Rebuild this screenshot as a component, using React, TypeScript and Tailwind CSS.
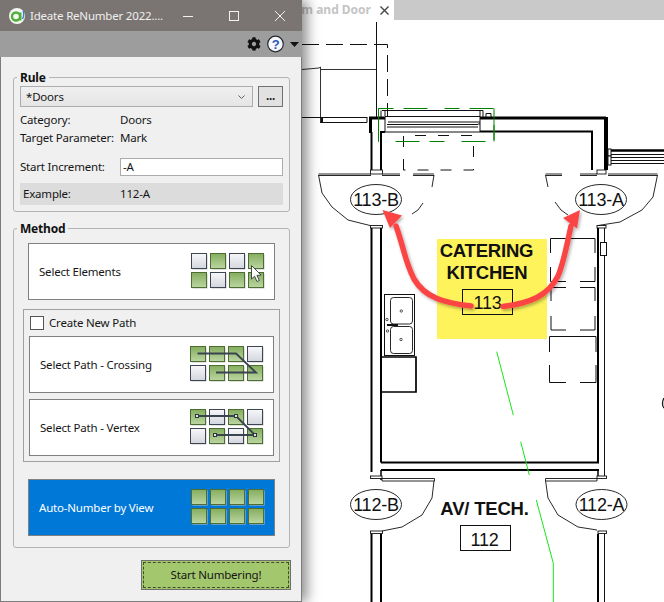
import React from "react";
import { FaCog } from "react-icons/fa";

type Mode = "none" | "cross" | "vertex" | "cursor";

function TileGrid({ pattern, mode, uid }: { pattern: string; mode: Mode; uid: string }) {
  const cells = pattern.split("");
  const nodes: [number, number][] = [[7, 7], [46, 7], [65, 26], [25, 26]];
  return (
    <svg width="76" height="37" viewBox="0 0 76 37" className="block shrink-0">
      <defs>
        <linearGradient id={uid + "g"} x1="0" y1="0" x2="0" y2="1">
          <stop offset="0" stopColor="#84ad5e" />
          <stop offset="1" stopColor="#bcd6a2" />
        </linearGradient>
        <linearGradient id={uid + "w"} x1="0" y1="0" x2="0" y2="1">
          <stop offset="0" stopColor="#f8f8fa" />
          <stop offset="1" stopColor="#d3d6de" />
        </linearGradient>
      </defs>
      {cells.map((c, i) => {
        const x = 0.5 + (i % 4) * 19;
        const y = 0.5 + Math.floor(i / 4) * 19;
        return (
          <g key={i}>
            <rect x={x + 1} y={y + 1} width="15" height="15" fill="#c4c4c4" />
            <rect
              x={x}
              y={y}
              width="15"
              height="15"
              fill={`url(#${uid}${c === "G" ? "g" : "w"})`}
              stroke={c === "G" ? "#4c6e33" : "#3d4552"}
              strokeWidth="1"
            />
          </g>
        );
      })}
      {mode === "cross" && (
        <path d="M7.5 7.5H46L66 26.5H26" fill="none" stroke="#3a4450" strokeWidth="1.8" />
      )}
      {mode === "vertex" && (
        <g>
          <path d="M7 7H46L65 26H25" fill="none" stroke="#3a4450" strokeWidth="1.8" />
          {nodes.map(([x, y], i) => (
            <rect key={i} x={x - 1.5} y={y - 1.5} width="3" height="3" fill="#dfe6d4" stroke="#2f3640" strokeWidth="1" />
          ))}
        </g>
      )}
      {mode === "cursor" && (
        <path
          d="M60.5 12.5V26L63.6 23.2L66 28.5L68.3 27.5L65.9 22.4L70 22Z"
          fill="#ffffff"
          stroke="#33383f"
          strokeWidth="0.9"
          strokeLinejoin="round"
        />
      )}
    </svg>
  );
}

function PlanText({ x, y, s, bold, children }: { x: number; y: number; s: number; bold?: boolean; children: string }) {
  return (
    <text
      x={x}
      y={y}
      fontSize={s}
      fontWeight={bold ? 700 : 400}
      fontFamily="'Liberation Sans', Arial, sans-serif"
      textAnchor="middle"
      fill="#111"
    >
      {children}
    </text>
  );
}

function Plan() {
  const tag = (cx: number, cy: number, t: string) => (
    <g key={t}>
      <ellipse cx={cx} cy={cy} rx="25.5" ry="15" fill="#fff" stroke="#111" strokeWidth="0.9" />
      <PlanText x={cx} y={cy + 6.5} s={18}>{t}</PlanText>
    </g>
  );
  return (
    <svg viewBox="302 20 362 582" width="362" height="582" className="block">
      <defs>
        <filter id="arrowShadow" x="-20%" y="-20%" width="150%" height="150%">
          <feDropShadow dx="1.5" dy="2" stdDeviation="1.5" floodColor="#000" floodOpacity="0.3" />
        </filter>
      </defs>
      <rect x="302" y="20" width="362" height="582" fill="#fff" />

      {/* upper left lines */}
      <path d="M376.5 22V117" stroke="#111" strokeWidth="1" />
      <path d="M302 44.5H387.5V117" fill="none" stroke="#111" strokeWidth="1" strokeDasharray="17 7" />
      <path d="M302 69.5L319 68L320.5 67V122M320.5 69.5H376" fill="none" stroke="#333" strokeWidth="1" />
      <path d="M302 117.5H320M320 117.5H367M320 122.5H367M367 117V122.5" fill="none" stroke="#111" strokeWidth="1" />
      <path d="M322 118V122" stroke="#111" strokeWidth="2" />

      {/* top wall */}
      <path d="M480 118H606" stroke="#000" strokeWidth="3" />
      <path d="M370.5 117V133M369 118H385" stroke="#000" strokeWidth="3" />
      <path d="M480 131.5H592V170" fill="none" stroke="#000" strokeWidth="2" />
      <path d="M606 117V170" stroke="#000" strokeWidth="4" />
      <path d="M381 171V132H385" fill="none" stroke="#000" strokeWidth="2" />
      <path d="M371.5 132V171" stroke="#000" strokeWidth="2" />

      {/* window */}
      <path
        d="M382 110.5H483M385 116.5H480M388 122H480M387 124.5H478M387 127H478M385 132H480M385 117V132M480 110V132M480 124H478M381 110.5V117M385 110.5V116M483 110.5V117M486 113.5H491V117M486 113.5V117"
        fill="none"
        stroke="#111"
        strokeWidth="1"
      />
      <path d="M403.5 170V135.5H473.5V170H403.5" fill="none" stroke="#111" strokeWidth="1" strokeDasharray="11 12" />
      <rect x="378.5" y="108.5" width="115.5" height="33" fill="none" stroke="#008000" strokeWidth="1" strokeDasharray="15 10 24 17" />
      <path d="M378.5 108.5V141.5M494 108.5V141.5" stroke="#008000" strokeWidth="1" />

      {/* right wall stub */}
      <path d="M610 150.5H664" stroke="#000" strokeWidth="2.5" />
      <path d="M610 154.5H664M610 157.5H664M610 160.5H664M610 163.5H664" stroke="#111" strokeWidth="1" />
      <rect x="608" y="149" width="3" height="7" fill="#fff" stroke="#111" />
      <rect x="608" y="156" width="3" height="9" fill="#fff" stroke="#111" />

      {/* 113 doors */}
      <path d="M318.5 174H371M382 174H400M413 174H434M318.5 175.5H371M382 175.5H400M413 175.5H434" fill="none" stroke="#111" strokeWidth="0.9" />
      <path d="M318.5 175L322 193L332 207L348 220L370 225.5M434 175L432 187M423 203L418 210L412 214" fill="none" stroke="#111" strokeWidth="0.9" />
      <path d="M545.5 174H562M580 174H597M608 174H657.5M545.5 175.5H562M580 175.5H597M608 175.5H657.5" fill="none" stroke="#111" strokeWidth="0.9" />
      <path d="M657.5 175L653 197L642 210L620 222L598 225.5M545.5 175L548 187M555 202L561 210L568 215" fill="none" stroke="#111" strokeWidth="0.9" />
      <rect x="370.5" y="170" width="12" height="4" fill="#fff" stroke="#111" strokeWidth="0.9" />
      <rect x="597" y="170" width="9" height="4" fill="#fff" stroke="#111" strokeWidth="0.9" />
      <rect x="370.5" y="225.5" width="12" height="2.5" fill="#fff" stroke="#111" strokeWidth="0.9" />
      <rect x="597" y="225.5" width="9" height="2.5" fill="#fff" stroke="#111" strokeWidth="0.9" />

      {/* side walls */}
      <path d="M371.5 228V472M381 228V462.5M371.5 534V602M381 534V602M598 228V462M598 534V602" stroke="#000" strokeWidth="2" />
      <path d="M604.5 228V476M604.5 534V602" stroke="#111" strokeWidth="1" />
      <path d="M381 462.5H599M381 470H599" stroke="#000" strokeWidth="2" />
      <path d="M381 470V480M598 470V476" stroke="#000" strokeWidth="1.5" />

      {/* 112 doors */}
      <rect x="370.5" y="476" width="11.5" height="2.5" fill="#fff" stroke="#111" strokeWidth="0.9" />
      <rect x="597" y="476" width="9.5" height="2.5" fill="#fff" stroke="#111" strokeWidth="0.9" />
      <path d="M382 478.5H434.5V481H382ZM545.5 478.5H597V481H545.5Z" fill="#fff" stroke="#111" strokeWidth="0.9" />
      <path d="M434 481L432 498L422 515L402 527L382 531M545.6 481L548 498L558 515L578 527L597 530" fill="none" stroke="#111" strokeWidth="0.9" />
      <rect x="370.5" y="531" width="12" height="2.5" fill="#fff" stroke="#111" strokeWidth="0.9" />
      <rect x="598" y="531" width="8.5" height="2.5" fill="#fff" stroke="#111" strokeWidth="0.9" />

      {/* equipment dashed */}
      <path d="M550.5 238.5H595M550.5 238.5V253M550.5 267V281.5H566M580 281.5H595V267M595 238.5V253" fill="none" stroke="#111" strokeWidth="1" />
      <path d="M551 287.5H566M580 287.5H595V301M551 287.5V301M551 316V330H566M580 330H595V316" fill="none" stroke="#111" strokeWidth="1" />
      <path d="M549.5 336.5H596V352M549.5 336.5V352M549.5 365V382.5H566M580 382.5H596V365" fill="none" stroke="#111" strokeWidth="1" />
      <rect x="600.5" y="242.5" width="6" height="13" fill="#fff" stroke="#111" strokeWidth="1" />

      {/* sink + counter */}
      <rect x="384.5" y="294.5" width="30" height="61" fill="#fff" stroke="#111" strokeWidth="1" />
      <rect x="390.5" y="297.5" width="22" height="26.5" rx="3" fill="#fff" stroke="#111" strokeWidth="0.9" />
      <rect x="390.5" y="326.5" width="22" height="27" rx="3" fill="#fff" stroke="#111" strokeWidth="0.9" />
      <circle cx="401.3" cy="311" r="1.2" fill="#fff" stroke="#111" strokeWidth="0.7" />
      <circle cx="401" cy="339.5" r="1.2" fill="#fff" stroke="#111" strokeWidth="0.7" />
      <circle cx="387" cy="319.5" r="1.2" fill="#fff" stroke="#111" strokeWidth="0.7" />
      <circle cx="387.5" cy="331" r="1.2" fill="#fff" stroke="#111" strokeWidth="0.7" />
      <path d="M387 325H398" stroke="#111" strokeWidth="2" />
      <path d="M381 357H416V392H381" fill="none" stroke="#000" strokeWidth="1.7" />

      {/* green path */}
      <path d="M496.7 351.7L513.3 415M520.7 441.7L529.3 475M536.3 500L553.3 563.3V602" fill="none" stroke="#19e619" strokeWidth="1" />

      {/* room tags */}
      <rect x="437" y="239" width="110" height="100" fill="#fff35c" />
      <PlanText x={486.5} y={257} s={18.5} bold>CATERING</PlanText>
      <PlanText x={487} y={279} s={18.5} bold>KITCHEN</PlanText>
      <rect x="462.5" y="289.5" width="50" height="25" fill="none" stroke="#111" strokeWidth="1" />
      <PlanText x={487.5} y={309} s={18}>113</PlanText>
      <PlanText x={484.5} y={515} s={18.5} bold>AV/ TECH.</PlanText>
      <rect x="460.5" y="525.5" width="50" height="25" fill="#fff" stroke="#111" strokeWidth="1" />
      <PlanText x={484.5} y={546} s={18}>112</PlanText>

      {tag(376, 199.5, "113-B")}
      {tag(601, 199.5, "113-A")}
      {tag(376, 504.5, "112-B")}
      {tag(601.5, 504.5, "112-A")}
      <path d="M664 398C662 401 662 406 664 408" fill="none" stroke="#111" strokeWidth="1.3" />

      {/* arrows */}
      <g filter="url(#arrowShadow)">
        <path d="M471 306C445 303 425 298 414 279C405 262 404 248 396 226" fill="none" stroke="#fb4545" strokeWidth="5.5" strokeLinecap="round" />
        <path d="M382.5 210L402 215.5L390 228Z" fill="#fb4545" />
        <path d="M503 306.5C530 303 548 296 558 276C564 262 566 248 571 226" fill="none" stroke="#fb4545" strokeWidth="5.5" strokeLinecap="round" />
        <path d="M580 210L563 218L577 228.5Z" fill="#fb4545" />
      </g>
    </svg>
  );
}

function MethodCard({
  label,
  className,
  children,
}: {
  label: string;
  className: string;
  children: React.ReactNode;
}) {
  return (
    <div className={`flex items-center justify-between border border-[#808080] ${className}`}>
      <span className="leading-none">{label}</span>
      {children}
    </div>
  );
}

export default function App() {
  return (
    <div className="flex h-[602px] w-[664px] overflow-hidden bg-white font-['Noto_Sans',sans-serif] text-[11.5px] tracking-[-0.2px] text-[#161616]">
      <div className="relative z-10 flex h-[602px] w-[302px] shrink-0 flex-col border-x border-b border-[#7d7d7d] bg-[#f0f0f0] shadow-[5px_0_12px_rgba(0,0,0,0.45)]">
        {/* title */}
        <div className="-mx-px flex h-[31px] shrink-0 items-center bg-[#7a7572] pl-[9px] text-[#efefef]">
          <svg width="16" height="16" viewBox="0 0 16 16" className="shrink-0">
            <circle cx="8" cy="8" r="8" fill="#f4f7f2" />
            <circle cx="7" cy="8.5" r="4" fill="none" stroke="#4fae3c" strokeWidth="2.4" />
            <path d="M11.5 4.5V12.5" stroke="#4fae3c" strokeWidth="2" />
            <path d="M14 2.5C15 5 15 8 13.5 11" fill="none" stroke="#3a7fc4" strokeWidth="1.4" />
          </svg>
          <span className="ml-[5px] w-[140px] whitespace-nowrap">Ideate ReNumber 2022....</span>
          <svg width="10" height="1" viewBox="0 0 10 1" className="ml-[13px] mt-[1px] shrink-0">
            <rect width="10" height="1" fill="#f2f2f2" />
          </svg>
          <svg width="10" height="10" viewBox="0 0 10 10" className="ml-[36px] shrink-0">
            <rect x="0.5" y="0.5" width="9" height="9" fill="none" stroke="#f2f2f2" />
          </svg>
          <svg width="10" height="10" viewBox="0 0 10 10" className="ml-[36px] shrink-0">
            <path d="M0 0L10 10M10 0L0 10" stroke="#f2f2f2" strokeWidth="1" />
          </svg>
        </div>
        {/* toolbar */}
        <div className="-mx-px flex h-[26px] shrink-0 items-center justify-end bg-[#9d9d9d] pr-[3px]">
          <FaCog className="h-[14px] w-[14px] text-[#111]" />
          <svg width="18" height="18" viewBox="0 0 18 18" className="ml-[6px] shrink-0">
            <circle cx="8.5" cy="9" r="7.8" fill="#f7f8fb" stroke="#262b33" strokeWidth="1.2" />
            <text x="8.5" y="13.5" textAnchor="middle" fontSize="13" fontWeight="700" fontFamily="'Liberation Sans', sans-serif" fill="#2b57b8">?</text>
          </svg>
          <svg width="9" height="5" viewBox="0 0 9 5" className="ml-[5px] shrink-0">
            <path d="M0 0H9L4.5 5Z" fill="#111" />
          </svg>
        </div>

        {/* rule */}
        <fieldset className="ml-3 mt-3 h-[143px] w-[277px] rounded-[3px] border border-[#b4b4b4] px-[6px]">
          <legend className="ml-[-3px] translate-y-px px-[3px] text-[12px] font-bold leading-[16px] text-[#111]">Rule</legend>
          <div className="flex gap-[5px] pt-px">
            <div className="flex h-[21px] w-[233px] items-center justify-between border border-[#acacac] bg-gradient-to-b from-[#f0f0f0] to-[#e5e5e5] pl-[5px] pr-[7px]">
              <span>*Doors</span>
              <svg width="7" height="4" viewBox="0 0 7 4">
                <path d="M0.5 0.5L3.5 3.5L6.5 0.5" fill="none" stroke="#606060" strokeWidth="1" />
              </svg>
            </div>
            <div className="flex h-[21px] w-[25px] items-center justify-center border border-[#707070] bg-[#e1e1e1] pb-[2px] font-bold leading-none">...</div>
          </div>
          <div className="mt-[4px] flex h-[18px] items-center">
            <span className="w-[100px]">Category:</span>
            <span>Doors</span>
          </div>
          <div className="flex h-[18px] items-center">
            <span className="w-[100px] whitespace-nowrap">Target Parameter:</span>
            <span>Mark</span>
          </div>
          <div className="mt-[11px] flex h-[18px] items-center">
            <span className="w-[100px]">Start Increment:</span>
            <div className="flex h-[18px] w-[163px] items-center border border-[#acacac] bg-white pl-[2px]">-A</div>
          </div>
          <div className="mt-[7px] flex h-[22px] items-center bg-[#dcdcdc] pl-[3px]">
            <span className="w-[97px]">Example:</span>
            <span>112-A</span>
          </div>
        </fieldset>

        {/* method */}
        <fieldset className="ml-3 mt-2 h-[328px] w-[277px] rounded-[3px] border border-[#b4b4b4] px-[14px]">
          <legend className="ml-[-11px] translate-y-px px-[3px] text-[12px] font-bold leading-[16px] text-[#111]">Method</legend>
          <MethodCard label="Select Elements" className="mt-[7px] h-[57px] bg-white pl-[10px] pr-[7px]">
            <TileGrid pattern="WGWGGWGG" mode="cursor" uid="a" />
          </MethodCard>
          <div className="-mx-[5px] mt-[9px] h-[153px] border border-[#a0a0a0] px-[5px]">
            <label className="flex h-[26px] items-center pl-px">
              <span className="h-[14px] w-[14px] border border-[#555] bg-white" />
              <span className="ml-[5px] leading-none">Create New Path</span>
            </label>
            <MethodCard label="Select Path - Crossing" className="h-[57px] bg-white pl-[10px] pr-[7px]">
              <TileGrid pattern="GGGWWGGG" mode="cross" uid="b" />
            </MethodCard>
            <MethodCard label="Select Path - Vertex" className="mt-[6px] h-[57px] bg-white pl-[10px] pr-[7px]">
              <TileGrid pattern="GWGWWGWG" mode="vertex" uid="c" />
            </MethodCard>
          </div>
          <MethodCard label="Auto-Number by View" className="mt-[17px] h-[57px] bg-[#0078d7] pl-[10px] pr-[7px] text-white">
            <TileGrid pattern="GGGGGGGG" mode="none" uid="d" />
          </MethodCard>
        </fieldset>

        <div className="ml-[140px] mt-3 flex h-[30px] w-[150px] items-center justify-center border border-[#6f6f6f] bg-[#a3c76d] p-px">
          <div className="flex h-full w-full items-center justify-center border border-dashed border-[#3e4f2a] leading-none">
            Start Numbering!
          </div>
        </div>
      </div>

      <div className="flex min-w-0 flex-1 flex-col">
        <div className="flex h-5 shrink-0 bg-[#c9c9c9]">
          <div className="flex w-[92px] items-center justify-end overflow-hidden whitespace-nowrap bg-white pr-[5px]">
            <span className="text-[12px] font-bold tracking-normal text-[#c4c4c4]">m and Door</span>
            <svg width="9" height="9" viewBox="0 0 9 9" className="ml-[9px] shrink-0">
              <path d="M0.5 0.5L8.5 8.5M8.5 0.5L0.5 8.5" stroke="#444" strokeWidth="1.4" />
            </svg>
          </div>
        </div>
        <Plan />
      </div>
    </div>
  );
}
